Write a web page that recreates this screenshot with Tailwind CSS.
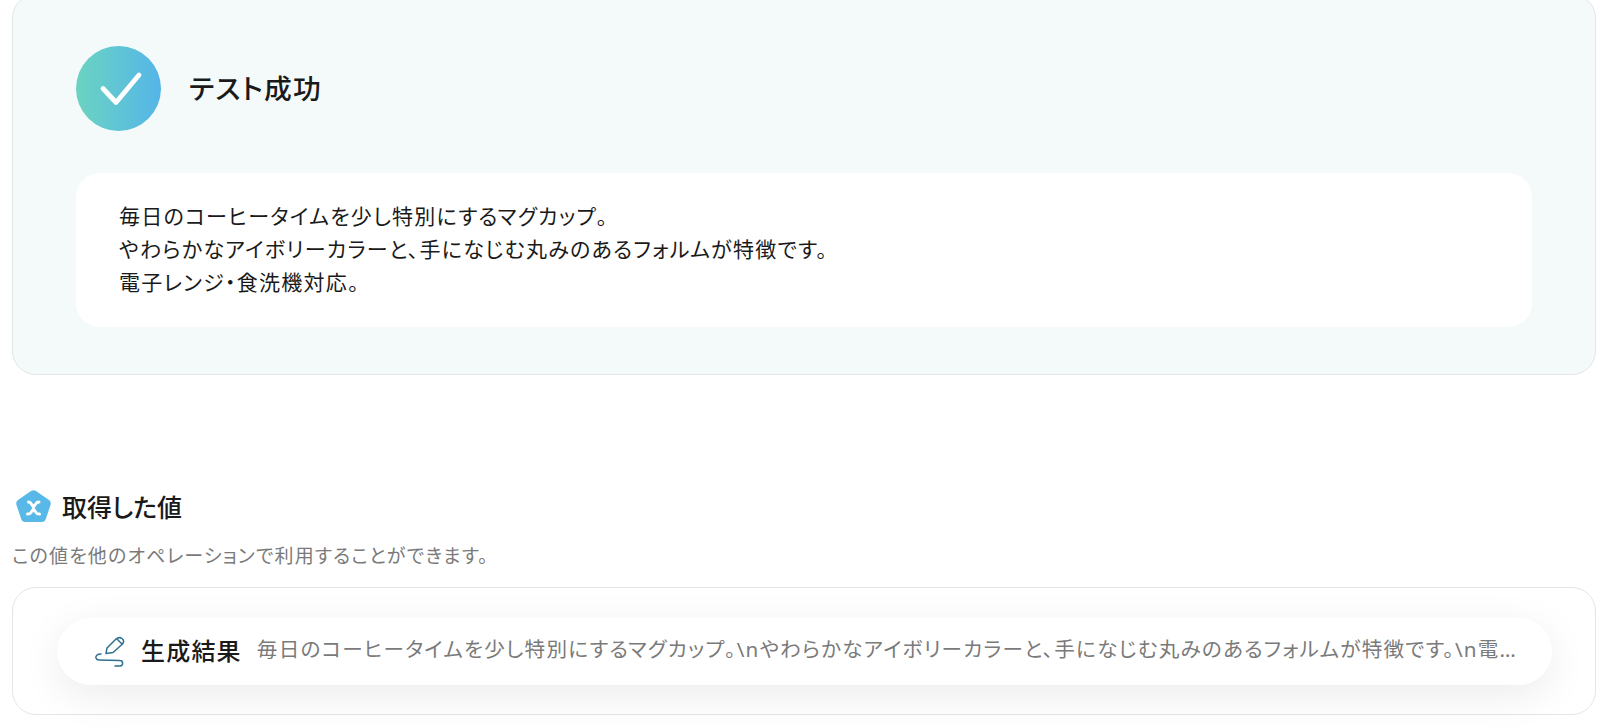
<!DOCTYPE html>
<html lang="ja"><head><meta charset="utf-8">
<script src="https://cdn.jsdelivr.net/npm/@tailwindcss/browser@4"></script>
</head>
<body class="bg-white h-[726px] overflow-hidden font-['Noto_Sans_CJK_JP','Noto_Sans',sans-serif] text-[#1a1a1a] [font-feature-settings:'palt']">
<div class="pl-3 pr-[4px]">
  <section class="-mt-[6px] h-[381px] rounded-[24px] border border-[#e2e6e8] bg-[#f4fafa] pl-[63px] pr-[63px] pt-[51px]">
    <div class="flex items-center gap-[28px] h-[85px]">
      <div class="w-[85px] h-[85px] rounded-full bg-gradient-to-r from-[#6cd3c0] to-[#55b5e8]">
        <svg width="85" height="85" viewBox="0 0 85 85" fill="none"><path d="M27 42.500 L40 56.500 L63 29" stroke="#fff" stroke-width="4.800" stroke-linecap="round" stroke-linejoin="round"/></svg>
      </div>
      <h2 class="text-[27.8px] font-medium leading-none tracking-[0.04em] -translate-y-px">テスト成功</h2>
    </div>
    <div class="mt-[42px] h-[154px] rounded-[24px] bg-white px-[43px] pt-[26px] text-[21px] leading-[33px] tracking-[0.06em]">
      毎日のコーヒータイムを少し特別にするマグカップ。<br>やわらかなアイボリーカラーと、手になじむ丸みのあるフォルムが特徴です。<br>電子レンジ・食洗機対応。
    </div>
  </section>
  <div class="mt-[113px] flex items-center gap-[10px] h-[36px]">
    <svg class="ml-[3px]" width="37" height="35" viewBox="0 0 37 35"><path d="M16 2 Q18.500 0.500 21 2 L34 11 Q36.500 13 35.500 16 L31 29.500 Q30 33 26.500 33 L10.500 33 Q7 33 6 29.500 L1.500 16 Q0.500 13 3 11 Z" fill="#58b9e8"/><path d="M13.500 13 Q15 13 16 14.500 L18.500 18 L21 14.500 Q22 13 24 13 M12.500 25 Q15 25 16 23.500 L18.500 20 L21 23.500 Q22 25 24.500 25" fill="none" stroke="#fff" stroke-width="3" stroke-linecap="round"/></svg>
    <h3 class="text-[25px] font-medium leading-none">取得した値</h3>
  </div>
  <p class="mt-[19px] text-[19px] leading-[24px] text-[#7a7a7a] tracking-[0.06em]">この値を他のオペレーションで利用することができます。</p>
  <section class="mt-[20px] h-[128px] rounded-[24px] border border-[#e2e6e8] bg-white pl-[44px] pr-[43px] pt-[30px]">
    <div class="h-[67px] rounded-full bg-white shadow-[0_10px_40px_rgba(0,0,0,0.08)] flex items-center pl-[38px] pr-[31px]">
      <svg class="shrink-0" width="30" height="32" viewBox="0 0 30 32" fill="none" stroke="#2f6f8f" stroke-width="1.500" stroke-linecap="round" stroke-linejoin="round"><path d="M11 17.500 L12 12 L21 3 Q24 0.500 27 2.500 Q30 5 27.500 8 L18 16.500 Z"/><path d="M22 3 L27 8"/><path d="M6 18 C2 18 0.500 20 1 22 C1.500 23.500 2.500 24 4 24 L25 24.500 C28.500 24.500 28.500 29.800 25 30 L20 30"/></svg>
      <span class="ml-[16px] shrink-0 text-[24px] font-medium leading-none tracking-[0.05em] -translate-y-[2px]">生成結果</span>
      <span class="ml-[15px] truncate font-['Noto_Sans','Noto_Sans_CJK_JP',sans-serif] text-[20.6px] text-[#7a7a7a] tracking-[0.06em] -translate-y-[2px]">毎日のコーヒータイムを少し特別にするマグカップ。\nやわらかなアイボリーカラーと、手になじむ丸みのあるフォルムが特徴です。\n電子レンジ・食洗機対応。</span>
    </div>
  </section>
</div>
</body></html>
